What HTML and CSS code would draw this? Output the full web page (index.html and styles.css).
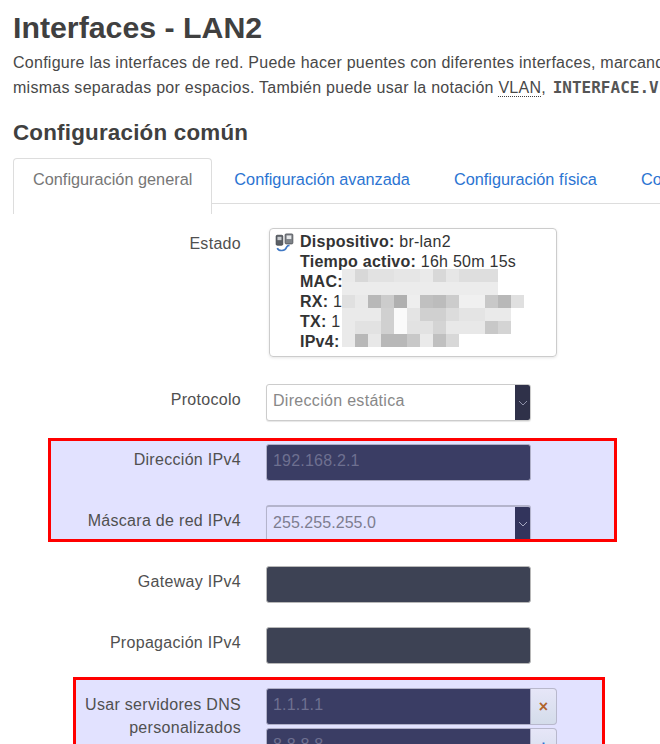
FILE: index.html
```html
<!DOCTYPE html>
<html lang="es">
<head>
    <meta charset="UTF-8">
    <meta name="viewport" content="width=device-width, initial-scale=1.0">
    <title>Interfaces - LAN2</title>
    <link rel="stylesheet" href="styles.css">
</head>
<body>
    <h1>Interfaces - LAN2</h1>
    <p class="intro">Configure las interfaces de red. Puede hacer puentes con diferentes interfaces, marcando<br>mismas separadas por espacios. También puede usar la notación <abbr>VLAN</abbr>, <code>INTERFACE.VLANNR</code></p>

    <h2>Configuración común</h2>

    <ul class="tabs">
        <li class="active"><a>Configuración general</a></li>
        <li><a>Configuración avanzada</a></li>
        <li><a>Configuración física</a></li>
        <li><a>Configuración del cortafuegos</a></li>
    </ul>

    <div class="row row-status">
        <label>Estado</label>
        <div class="status">
            <svg class="status-icon" width="19" height="19" viewBox="0 0 17 17">
                <rect x="1" y="2" width="6" height="9" rx="1" fill="#5a5f66" stroke="#33373d" stroke-width="0.6"/>
                <rect x="2.2" y="3.4" width="3.6" height="3" fill="#c9ccd0"/>
                <rect x="9" y="0.8" width="7" height="9" rx="1" fill="#7d8288" stroke="#3d4147" stroke-width="0.6"/>
                <rect x="10.4" y="2.2" width="4.2" height="3.2" fill="#e6e8ea"/>
                <path d="M2 13.5c1.5 3 7 3 8.5-1 .6-1.2 1.5-1.5 2.5-1.5" fill="none" stroke="#3f78c4" stroke-width="1.5"/>
            </svg>
            <div class="status-text">
                <div><b>Dispositivo:</b> br-lan2</div>
                <div><b>Tiempo activo:</b> 16h 50m 15s</div>
                <div><b>MAC:</b></div>
                <div><b>RX:</b> 1</div>
                <div><b>TX:</b> 1</div>
                <div><b>IPv4:</b></div>
            </div>
            <!-- pixelated part of the screenshot, covers the addresses -->
            <svg class="mosaic" width="182" height="78" viewBox="0 0 14 6" shape-rendering="crispEdges">
                <rect x="0" y="0" width="1" height="1" fill="#eaeaea"/><rect x="1" y="0" width="1" height="1" fill="#d8d8d8"/><rect x="2" y="0" width="2" height="1" fill="#e2e2e2"/><rect x="4" y="0" width="2" height="1" fill="#e6e6e6"/><rect x="6" y="0" width="1" height="1" fill="#eaeaea"/><rect x="7" y="0" width="1" height="1" fill="#d8d8d8"/><rect x="8" y="0" width="1" height="1" fill="#e6e6e6"/><rect x="9" y="0" width="3" height="1" fill="#dedede"/>
                <rect x="0" y="1" width="12" height="1" fill="#ececec"/>
                <rect x="0" y="2" width="1" height="1" fill="#e0e0e0"/><rect x="1" y="2" width="1" height="1" fill="#e9e9e9"/><rect x="2" y="2" width="1" height="1" fill="#b8b8b8"/><rect x="3" y="2" width="1" height="1" fill="#cccccc"/><rect x="4" y="2" width="1" height="1" fill="#b0b0b0"/><rect x="5" y="2" width="1" height="1" fill="#eeeeee"/><rect x="6" y="2" width="1" height="1" fill="#c0c0c0"/><rect x="7" y="2" width="1" height="1" fill="#bcbcbc"/><rect x="8" y="2" width="1" height="1" fill="#cccccc"/><rect x="9" y="2" width="2" height="1" fill="#f0f0f0"/><rect x="11" y="2" width="1" height="1" fill="#c8c8c8"/><rect x="12" y="2" width="1" height="1" fill="#b8b8b8"/><rect x="13" y="2" width="1" height="1" fill="#e0e0e0"/>
                <rect x="0" y="3" width="3" height="1" fill="#eaeaea"/><rect x="3" y="3" width="1" height="1" fill="#d0d0d0"/><rect x="4" y="3" width="1" height="1" fill="#fafafa"/><rect x="5" y="3" width="1" height="1" fill="#e4e4e4"/><rect x="6" y="3" width="2" height="1" fill="#d0d0d0"/><rect x="8" y="3" width="1" height="1" fill="#dcdcdc"/><rect x="9" y="3" width="2" height="1" fill="#e4e4e4"/><rect x="11" y="3" width="2" height="1" fill="#eaeaea"/>
                <rect x="0" y="4" width="1" height="1" fill="#eaeaea"/><rect x="1" y="4" width="2" height="1" fill="#e2e2e2"/><rect x="3" y="4" width="1" height="1" fill="#d0d0d0"/><rect x="4" y="4" width="1" height="1" fill="#fafafa"/><rect x="5" y="4" width="2" height="1" fill="#e2e2e2"/><rect x="7" y="4" width="1" height="1" fill="#d4d4d4"/><rect x="8" y="4" width="3" height="1" fill="#e8e8e8"/><rect x="11" y="4" width="1" height="1" fill="#c8c8c8"/><rect x="12" y="4" width="1" height="1" fill="#d4d4d4"/>
                <rect x="0" y="5" width="1" height="1" fill="#eaeaea"/><rect x="1" y="5" width="1" height="1" fill="#b8b8b8"/><rect x="2" y="5" width="1" height="1" fill="#e8e8e8"/><rect x="3" y="5" width="2" height="1" fill="#b8b8b8"/><rect x="5" y="5" width="1" height="1" fill="#c8c8c8"/><rect x="6" y="5" width="1" height="1" fill="#eaeaea"/><rect x="7" y="5" width="1" height="1" fill="#c0c0c0"/><rect x="8" y="5" width="1" height="1" fill="#d8d8d8"/>
            </svg>
        </div>
    </div>

    <div class="row">
        <label>Protocolo</label>
        <div class="select">
            <span>Dirección estática</span>
            <i class="arrow"><svg width="10" height="6" viewBox="0 0 10 6"><path d="M1 1l4 4 4-4" fill="none" stroke="#8d90a8" stroke-width="1"/></svg></i>
        </div>
    </div>

    <div class="marked marked-ipv4">
        <div class="row">
            <label>Dirección IPv4</label>
            <div class="input input-blue">192.168.2.1</div>
        </div>
        <div class="row">
            <label>Máscara de red IPv4</label>
            <div class="select select-tint">
                <span>255.255.255.0</span>
                <i class="arrow"><svg width="10" height="6" viewBox="0 0 10 6"><path d="M1 1l4 4 4-4" fill="none" stroke="#a5a7c0" stroke-width="1"/></svg></i>
            </div>
        </div>
    </div>

    <div class="row">
        <label>Gateway IPv4</label>
        <div class="input input-dark"></div>
    </div>

    <div class="row">
        <label>Propagación IPv4</label>
        <div class="input input-dark"></div>
    </div>

    <div class="marked marked-dns">
        <div class="row row-dns">
            <label>Usar servidores DNS personalizados</label>
            <div class="dns-list">
                <div class="dns-item">
                    <div class="input input-blue">1.1.1.1</div>
                    <button class="btn-remove">×</button>
                </div>
                <div class="dns-item">
                    <div class="input input-blue">8.8.8.8</div>
                    <button class="btn-add">+</button>
                </div>
            </div>
        </div>
    </div>
</body>
</html>
```

FILE: styles.css
```css
html, body {
    height: 744px;
    overflow: hidden;
}
body {
    margin: 0;
    padding: 0 0 0 13px;
    font-family: "Liberation Sans", Arial, sans-serif;
    font-size: 16px;
    color: #404040;
    background: white;
}
h1 {
    margin: 0;
    padding-top: 11px;
    font-size: 30.3px;
    line-height: 34px;
    color: #404040;
}
.intro {
    margin: 5px 0 0;
    line-height: 25px;
    white-space: nowrap;
    font-size: 16px;
    letter-spacing: 0.26px;
    color: #484848;
}
abbr {
    border-bottom: 1px dotted #404040;
}
code {
    margin-left: 2px;
    font-family: "DejaVu Sans Mono", monospace;
    font-size: 16px;
    letter-spacing: 0;
    font-weight: bold;
    color: #555;
}
h2 {
    margin: 19px 0 0;
    font-size: 22.4px;
    letter-spacing: 0.2px;
    line-height: 28px;
    color: #404040;
}
.tabs {
    display: flex;
    list-style: none;
    margin: 11px 0 0;
    padding: 0;
    height: 45px;
    border-bottom: 1px solid #ddd;
    white-space: nowrap;
}
.tabs li {
    padding: 11px 20px 0;
    margin-right: 4px;
    color: #2b74d2;
    font-size: 16.3px;
    line-height: 20px;
}
.tabs li.active {
    color: #777;
    background: white;
    border: 1px solid #ddd;
    border-bottom: none;
    border-radius: 4px 4px 0 0;
    height: 45px;
    padding: 10px 19px 0;
    margin-right: 2px;
}
.row {
    display: flex;
    align-items: flex-start;
    gap: 25px;
    margin-bottom: 24px;
    --label-w: 228px;
}
.row label {
    width: var(--label-w);
    flex: none;
    text-align: right;
    font-size: 16px;
    letter-spacing: 0.3px;
    line-height: 20px;
    padding-top: 6px;
    color: #505050;
}
.row-status {
    margin-top: 24px;
    margin-bottom: 27px;
}
.status {
    position: relative;
    box-sizing: border-box;
    width: 288px;
    height: 129px;
    margin-left: 3px;
    padding: 3px 5px;
    display: flex;
    gap: 6px;
    border: 1px solid #ccc;
    border-radius: 4px;
    box-shadow: 0 1px 3px rgba(0,0,0,0.1);
    font-size: 16px;
    letter-spacing: 0.25px;
    line-height: 20px;
    color: #333;
}
.status-icon {
    flex: none;
    margin-top: 1px;
}
.mosaic {
    position: absolute;
    left: 72px;
    top: 40px;
}
.select, .input {
    box-sizing: border-box;
    width: 265px;
    height: 37px;
    border: 1px solid #ccc;
    border-radius: 3px;
    font-size: 16px;
    line-height: 32px;
    padding-left: 6px;
    color: #888;
    flex: none;
}
.select {
    display: flex;
    justify-content: space-between;
    padding-right: 0;
    background: white;
    box-shadow: 0 1px 1px rgba(0,0,0,0.1);
    overflow: hidden;
    letter-spacing: 0.3px;
}
.select-tint {
    background: #e2e2ff;
    border-color: #b4b4cc;
    border-top-width: 2px;
    letter-spacing: 0.05px;
    color: #7d7d90;
}
.arrow {
    display: flex;
    align-items: center;
    justify-content: center;
    width: 15px;
    background: #2f3149;
}
.select-tint .arrow {
    background: #32345c;
}
.input-blue {
    background: #3a3d64;
    border-color: #b0b0c8;
    letter-spacing: 0.2px;
    color: #6e7090;
}
.input-dark {
    background: #3d4254;
    border-color: #b8b8b8;
}
.marked {
    box-sizing: border-box;
    border: 3px solid #ff0000;
    background: #e2e2ff;
    overflow: hidden;
}
.marked-ipv4 {
    width: 569px;
    height: 104px;
    margin: -7px 0 24px 35px;
    padding-top: 3px;
}
.marked-ipv4 .row {
    --label-w: 190px;
}
.marked-dns {
    width: 532px;
    height: 90px;
    margin: -11px 0 0 60px;
    padding-top: 8px;
}
.row-dns {
    --label-w: 165px;
}
.row-dns label {
    padding-top: 5px;
    line-height: 23px;
}
.dns-list {
    display: flex;
    flex-direction: column;
    gap: 3px;
}
.dns-item {
    display: flex;
}
.dns-item .input {
    border-radius: 3px 0 0 3px;
}
button {
    box-sizing: border-box;
    width: 26px;
    height: 37px;
    padding: 0;
    border: 1px solid #b8b8cc;
    border-left: none;
    border-radius: 0 4px 4px 0;
    background: linear-gradient(#e6e6f8, #d4dcea);
    font-family: "Liberation Sans", Arial, sans-serif;
    font-size: 16px;
    font-weight: bold;
}
.btn-remove {
    color: #b0632c;
}
.btn-add {
    color: #2b74d2;
}
```
